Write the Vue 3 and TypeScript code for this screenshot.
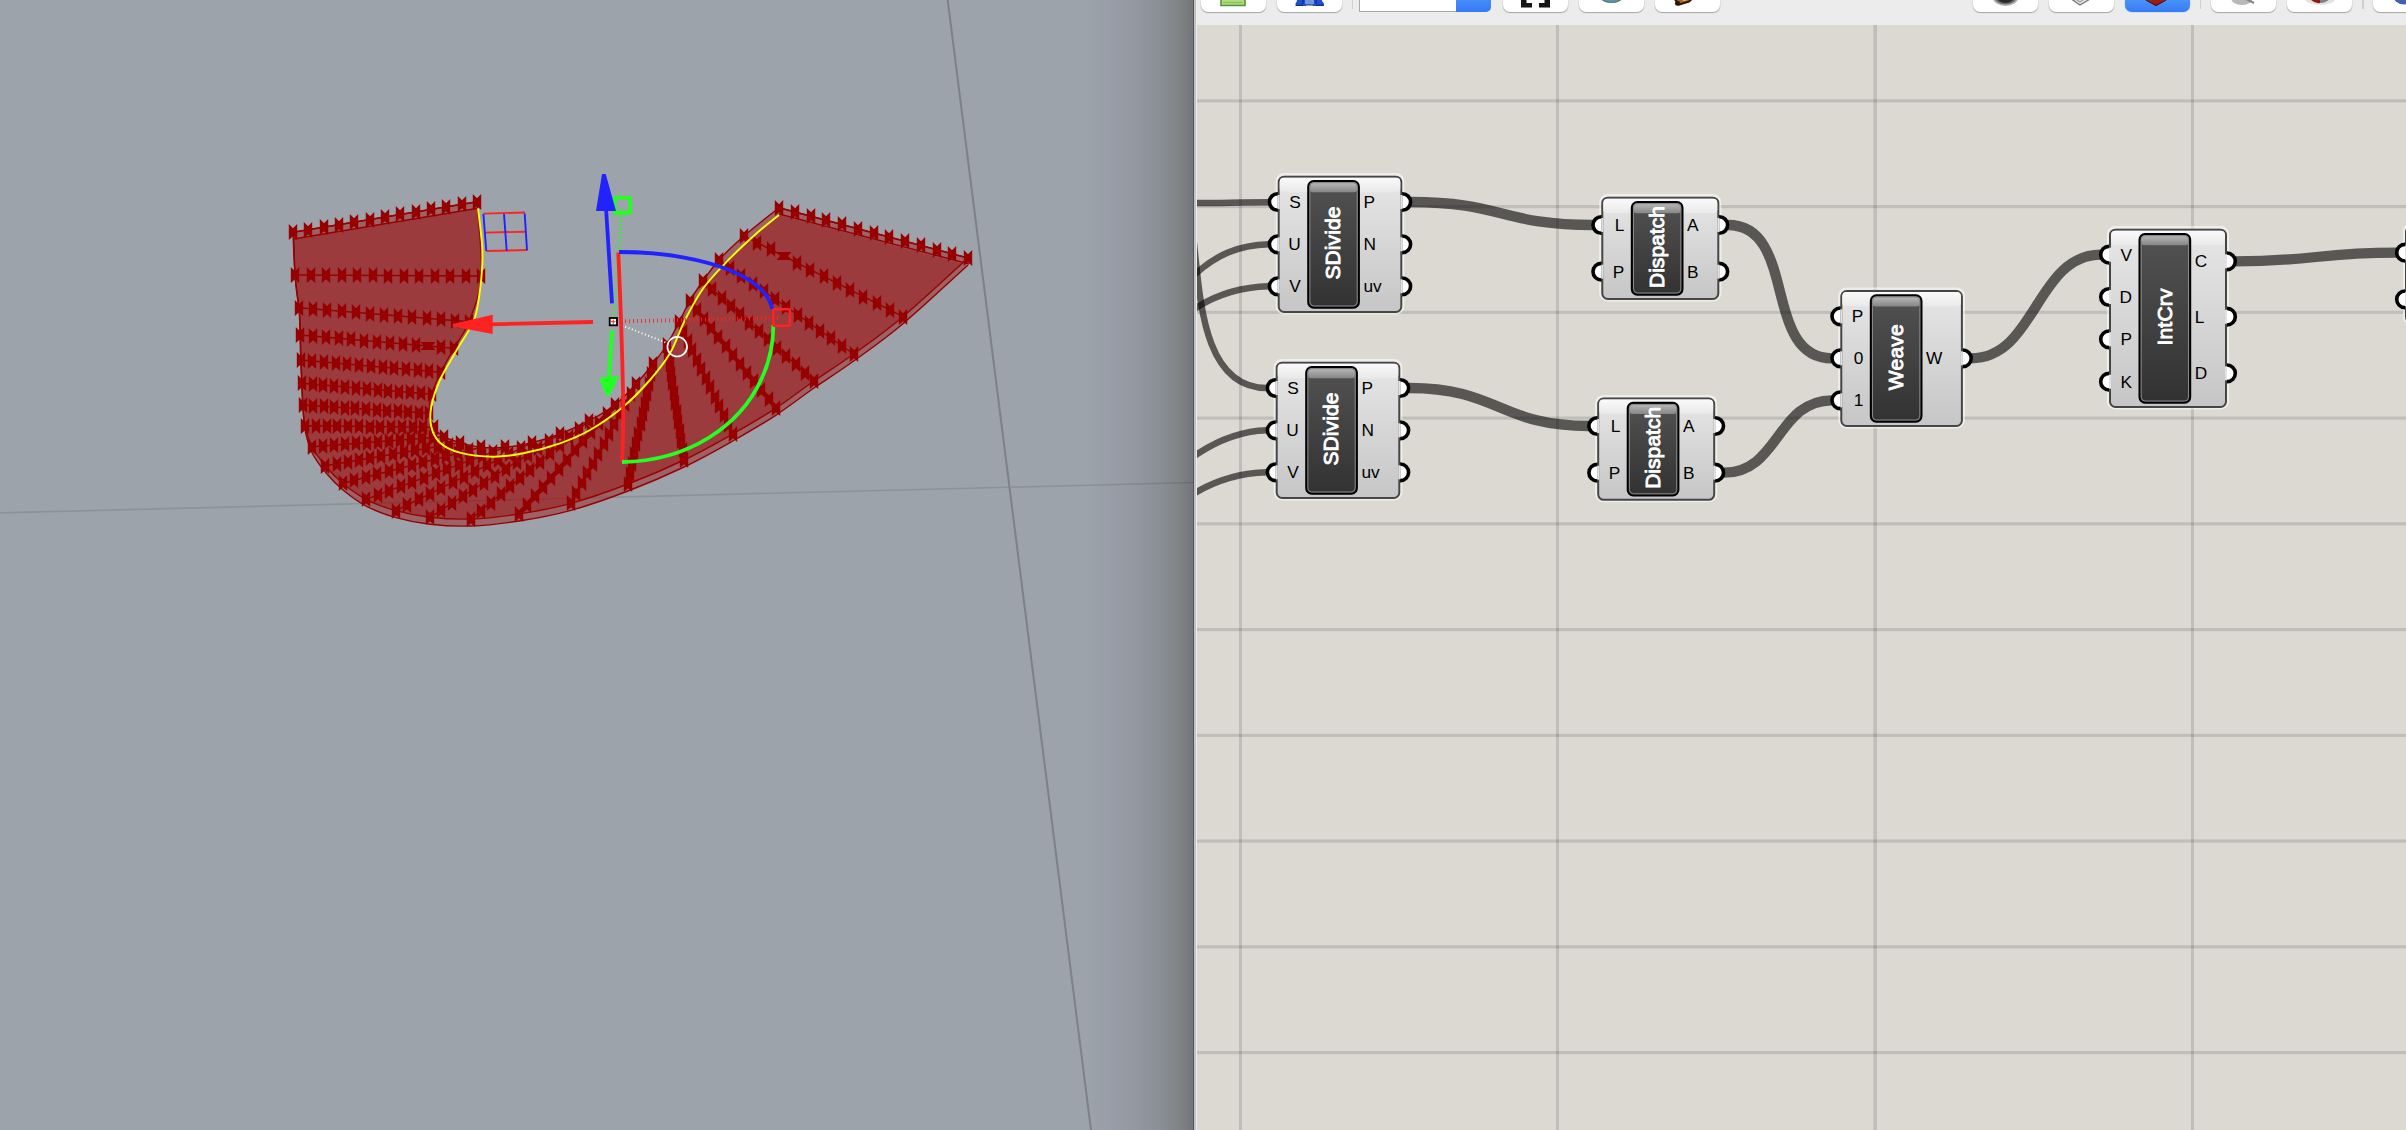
<script setup lang="ts">
type Pt = [number, number]

interface GhNode {
  name: string
  x: number
  y: number
  w: number
  h: number
  len: number
  inputs: [string, number][]
  outputs: [string, number][]
}

const outer: Pt[] = [
  [293, 232.3], [295, 275], [299, 307.7], [300, 335], [300.7, 360], [301.7, 383.3], [302.7, 405],
  [305, 425.7], [312, 446.7], [325.3, 465.7], [342.7, 483.3], [366, 499.3], [396, 510.7], [430, 517.3],
  [471, 519], [519, 514], [571, 503.3], [628, 484], [684, 460], [732.7, 434], [775.7, 408.3],
  [814, 381], [853.7, 354], [903, 316.7], [968, 258],
]
const inner: Pt[] = [
  [477, 201.7], [481.3, 276], [469, 321.7], [454, 348.3], [441, 372.3], [431.7, 394.3], [429.3, 413.3],
  [434, 427.3], [444, 436.7], [460, 442.7], [481, 447.3], [505, 447.3], [532, 442.7], [560, 434],
  [589, 420.7], [615, 405], [636, 384], [653, 364], [666.7, 345], [679, 322.3], [689.7, 301],
  [703, 281], [719, 260], [744, 236], [779, 207.7],
]
const yellow: Pt[] = [
  [478, 208.3], [482, 243.3], [482.3, 263.3], [480, 290], [474, 320], [456.7, 350], [440, 380],
  [431.3, 406.7], [431.3, 426.7], [440, 442.7], [460, 452.7], [493.3, 456.7], [523.3, 453.3],
  [560, 443.3], [590, 430], [623.3, 406.7], [650, 380], [670, 353.3], [685, 320], [703.3, 288.3],
  [726.7, 261.7], [756.7, 233.3], [779, 215],
]

/** Catmull-Rom spline through the given points, as cubic segments. */
function spline(p: Pt[], first = 'M'): string {
  let d = `${first}${p[0][0]} ${p[0][1]}`
  for (let i = 0; i < p.length - 1; i++) {
    const a = p[Math.max(i - 1, 0)]
    const b = p[i]
    const c = p[i + 1]
    const e = p[Math.min(i + 2, p.length - 1)]
    d += `C${b[0] + (c[0] - a[0]) / 6} ${b[1] + (c[1] - a[1]) / 6} ${c[0] - (e[0] - b[0]) / 6} ${c[1] - (e[1] - b[1]) / 6} ${c[0]} ${c[1]}`
  }
  return d
}

const lower: Pt[] = outer.map(([x, y], i) => [x + (i < 12 ? 0.6 : 0), y + 7] as Pt)
const surfaceA = spline(inner) + spline([...outer].reverse(), 'L') + 'Z'
const surfaceB = spline(yellow) + spline([...lower].reverse(), 'L') + 'Z'

const rows = outer.map((o, i) => `M${o[0]} ${o[1]}L${inner[i][0]} ${inner[i][1]}`).join('')

const markers = outer
  .flatMap((o, i) =>
    Array.from({ length: 13 }, (_, k) => {
      const x = Math.round(o[0] + ((inner[i][0] - o[0]) * k) / 12)
      const y = Math.round(o[1] + ((inner[i][1] - o[1]) * k) / 12)
      const flat = (i === 3 && k === 10) || (i === 23 && k === 9)
      return flat
        ? `M${x - 7.5} ${y - 4}H${x + 7.5}L${x + 4} ${y}L${x + 7.5} ${y + 4}H${x - 7.5}L${x - 4} ${y}Z`
        : `M${x - 4.2} ${y - 8}L${x} ${y - 3.7}L${x + 4.2} ${y - 8}V${y + 8}L${x} ${y + 4.2}L${x - 4.2} ${y + 8}Z`
    }),
  )
  .join('')

const gridX = [1239, 1556, 1873.3, 2191]
const gridY = Array.from({ length: 10 }, (_, i) => 99.25 + i * 105.75)

const nodes: GhNode[] = [
  { name: 'SDivide', x: 1277.7, y: 175.7, w: 124.6, h: 137.3, len: 73, inputs: [['S', 202], ['U', 244.3], ['V', 286.3]], outputs: [['P', 202], ['N', 244.3], ['uv', 286.3]] },
  { name: 'SDivide', x: 1275.7, y: 361.7, w: 124.6, h: 137.3, len: 73, inputs: [['S', 388], ['U', 430.3], ['V', 472.3]], outputs: [['P', 388], ['N', 430.3], ['uv', 472.3]] },
  { name: 'Dispatch', x: 1601.3, y: 196.7, w: 118, h: 103.3, len: 82, inputs: [['L', 225], ['P', 271.7]], outputs: [['A', 225], ['B', 271.7]] },
  { name: 'Dispatch', x: 1597.2, y: 397.5, w: 118, h: 103.3, len: 82, inputs: [['L', 426], ['P', 472.7]], outputs: [['A', 426], ['B', 472.7]] },
  { name: 'Weave', x: 1840.3, y: 290, w: 122.6, h: 137, len: 66, inputs: [['P', 316.3], ['0', 358.3], ['1', 400.3]], outputs: [['W', 358.3]] },
  { name: 'IntCrv', x: 2109, y: 228.7, w: 118, h: 179.3, len: 57, inputs: [['V', 254.7], ['D', 297], ['P', 339.3], ['K', 381.7]], outputs: [['C', 261.3], ['L', 316.7], ['D', 373.3]] },
  { name: '', x: 2405, y: 225.5, w: 118, h: 98, len: 0, inputs: [['', 252.7], ['', 299.3]], outputs: [] },
]

const thinWires = [
  'M1190 203C1220 203 1240 202.300 1269 202.300',
  'M1269 244.300C1240 245 1215 254 1190 279',
  'M1269 286.300C1240 287 1215 294 1190 312',
  'M1193 235C1200 290 1200 388 1267 388',
  'M1267 430.300C1240 431 1215 441 1190 459',
  'M1267 472.300C1240 473 1215 480 1190 496',
]

function wire(x1: number, y1: number, x2: number, y2: number, h: number): string {
  return `M${x1} ${y1}C${x1 + h} ${y1} ${x2 - h} ${y2} ${x2} ${y2}`
}
const thickWires = [
  wire(1411, 202, 1593, 225, 91),
  wire(1409, 388, 1589, 426, 90),
  wire(1728, 225, 1832, 358.3, 70),
  wire(1724, 472.7, 1832, 400.3, 55),
  wire(1971, 358.3, 2101, 254.7, 65),
  wire(2235, 261.3, 2397, 252.7, 80),
]
</script>

<template>
  <main class="screen">
    <svg class="viewport" width="1194" height="1130" viewBox="0 0 1194 1130">
      <defs>
        <linearGradient id="shade" x1="0" x2="1" y1="0" y2="0">
          <stop offset="0" stop-color="#8c8f9a" stop-opacity="0" />
          <stop offset=".35" stop-color="#8c8f9a" stop-opacity=".4" />
          <stop offset=".68" stop-color="#888c95" stop-opacity=".9" />
          <stop offset=".87" stop-color="#7f8386" />
          <stop offset="1" stop-color="#727577" />
        </linearGradient>
      </defs>
      <rect width="1194" height="1130" fill="#9ca3ab" />
      <rect x="1086" width="108" height="1130" fill="url(#shade)" />
      <path d="M0 512.900L1194 482.500" stroke="#000" stroke-opacity=".1" stroke-width="1.700" />
      <path d="M947.700 0L1091 1130" stroke="#7d8188" stroke-width="2" />
      <g fill="#9c0406" fill-opacity=".41">
        <path :d="surfaceA" stroke="#960000" stroke-width="1.400" />
        <path :d="surfaceB" />
      </g>
      <g fill="none" stroke="#960000" stroke-width="1.400">
        <path :d="spline(lower)" />
        <path d="M293.500 239L478 208.300M779 214L969 264" />
        <path :d="rows" />
      </g>
      <path :d="markers" fill="#960000" />
      <path :d="spline(yellow)" fill="none" stroke="#ff0" stroke-width="1.900" />

      <g fill="none" stroke-width="1.900">
        <path stroke="#f22" d="M483.500 213.600L525 212.500M485 232.600L525 231.700M486.500 251L527.500 250" />
        <path stroke="#22f" d="M483.400 214L486.300 251M504 214L506.700 250.700M524.700 213.500L527 250.300" />
      </g>
      <g fill="none" stroke-width="3.800">
        <path stroke="#2f2" stroke-width="4" stroke-dasharray=".9 3.100" d="M621.500 209L613.300 321" />
        <path stroke="#f22" stroke-width="4" stroke-dasharray=".9 3.100" d="M617 321.500L779 317.700" />
        <path stroke="#fff" stroke-width="2" stroke-dasharray="1 2.500" d="M622 325.500L671 344.500" />
        <path stroke="#22f" d="M612 303.300L606 208" />
        <path stroke="#f22" d="M593 322L490 324.300" />
        <path stroke="#2f2" d="M612 330L608.700 380" />
        <path stroke="#f22" d="M618.300 252.500C620 290 622 345 623 390C623.500 420 623 445 622 461.500" />
        <path stroke="#2f2" d="M622 462C690 461 740 425 761 380C770 361 773.500 342 773.300 325" />
        <path stroke="#22f" d="M619 252C660 252 690 257 718.300 266C748 276 768 290 772.300 309" />
        <rect x="614.700" y="197.700" width="15.300" height="15.300" rx="1" stroke="#2f2" />
        <rect x="773.300" y="309.300" width="16.500" height="16.500" rx="1.500" stroke="#f22" stroke-width="2.600" />
      </g>
      <path fill="#22f" d="M602 174H605.700L616 211H596Z" />
      <path fill="#f22" d="M452.700 324L492.700 314.700V334L452.700 326.500Z" />
      <path fill="#2f2" d="M599 377.700L619 376L609.500 395.700H606Z" />
      <rect x="609.700" y="318" width="7.300" height="7.300" fill="#fff" stroke="#000" stroke-width="1.800" />
      <path d="M613.300 319.500V324M611 321.700H615.600" stroke="#f22" stroke-width="1" />
      <circle cx="677.200" cy="346.700" r="9.800" fill="none" stroke="#fff" stroke-width="1.700" />
      <rect x="1193" width="1" height="1130" fill="#56595c" />
    </svg>

    <section class="window">
      <header class="toolbar">
        <div class="group">
          <span class="btn"><svg viewBox="0 0 65 13"><path d="M20-6H44V5.500H20Z" fill="#b4dc7c" stroke="#4f9444" stroke-width="1.600" /><path d="M22 2.500H42" stroke="#8cc45a" stroke-width="1.400" /></svg></span>
          <span class="btn"><svg viewBox="0 0 65 13"><path d="M20-4H45V1L47 3.500V6H18.500V3.500L20 1Z" fill="#1f4fd8" /><path d="M28-1H37V4H28Z" fill="#6d97dd" /><path d="M29 5.300H36" stroke="#b9ad6c" stroke-width="1" /><path d="M19 5.300H26M39 5.300H46.500M26-1V4M39-1V4" stroke="#132f7c" stroke-width="1.300" /></svg></span>
        </div>
        <i class="sep first" />
        <div class="combo"><i /></div>
        <div class="group">
          <span class="btn"><svg viewBox="0 0 65 13"><path d="M18-4V7.500H29V3H23.500V-4ZM47-4V7.500H36V3H41.500V-4Z" fill="#161616" /></svg></span>
          <span class="btn"><svg viewBox="0 0 65 13"><ellipse cx="32.500" cy="-3" rx="10.500" ry="5.500" fill="#5b98a5" stroke="#66757d" stroke-width="1.200" /></svg></span>
          <span class="btn"><svg viewBox="0 0 65 13"><path d="M18-3L24 4.500L34 1.500L39-3Z" fill="#a8662a" stroke="#32170d" stroke-width="2" /><circle cx="22.500" cy="3.300" r="2.500" fill="#2e130f" /><path d="M28 0L33-1" stroke="#f2c355" stroke-width="2" /></svg></span>
        </div>
        <div class="group right">
          <span class="btn"><svg viewBox="0 0 65 13"><ellipse cx="32.500" cy="-3" rx="13" ry="9" fill="#b4b4b4" /><ellipse cx="32.500" cy="-3" rx="11" ry="7.500" fill="#6e6e6e" /><ellipse cx="32.500" cy="-2" rx="8" ry="5" fill="#292929" /></svg></span>
          <span class="btn"><svg viewBox="0 0 65 13"><path d="M21-2L31 5L41-1" fill="#eee" stroke="#777" stroke-width="1.400" /><path d="M25-2L31 2L37-2" fill="none" stroke="#999" stroke-width="1.200" /></svg></span>
          <span class="btn active"><svg viewBox="0 0 65 13"><path d="M20-2L31 5.500L42-2Z" fill="#9c1c10" /><path d="M21 0L31 5.500L41 0" fill="none" stroke="#541015" stroke-width="1.400" /></svg></span>
        </div>
        <i class="sep" />
        <div class="group">
          <span class="btn"><svg viewBox="0 0 65 13"><ellipse cx="31" cy="-2" rx="11" ry="7" fill="#b8b8b8" /><path d="M35-1L43 3" stroke="#858585" stroke-width="2" /></svg></span>
          <span class="btn"><svg viewBox="0 0 65 13"><ellipse cx="33" cy="-1" rx="15" ry="6" fill="#e2e2e2" /><path d="M23-1Q28 4 33 3V-2Z" fill="#8f1812" /><path d="M33-2V3Q40 3 43-2Z" fill="#7f817c" /></svg></span>
        </div>
        <i class="sep" />
        <span class="btn"><svg viewBox="0 0 65 13"><ellipse cx="31" cy="-5" rx="11" ry="9.500" fill="#4460ad" /></svg></span>
      </header>

      <svg class="graph" width="1209" height="1105" viewBox="1197 25 1209 1105">
        <defs>
          <linearGradient id="body" x1="0" x2="0" y1="0" y2="1">
            <stop offset="0" stop-color="#e6e6e6" />
            <stop offset="1" stop-color="#c6c6c6" />
          </linearGradient>
          <linearGradient id="gloss" x1="0" x2="0" y1="0" y2="1">
            <stop offset="0" stop-color="#fafafa" />
            <stop offset="1" stop-color="#e9e9e9" />
          </linearGradient>
          <linearGradient id="plate" x1="0" x2="0" y1="0" y2="1">
            <stop offset="0" stop-color="#525252" />
            <stop offset="1" stop-color="#323232" />
          </linearGradient>
          <linearGradient id="shine" x1="0" x2="0" y1="0" y2="1">
            <stop offset="0" stop-color="#b8b8b8" />
            <stop offset="1" stop-color="#868686" />
          </linearGradient>
        </defs>
        <rect x="1197" y="25" width="1209" height="1105" fill="#dcd9d3" />
        <g fill="#000" fill-opacity=".12">
          <rect v-for="x in gridX" :key="x" :x="x" y="25" :width="x === 1873.3 ? 3.7 : 3" height="1105" />
          <rect v-for="y in gridY" :key="y" x="1197" :y="y" width="1209" height="3.200" />
        </g>
        <g fill="none" stroke="#000" stroke-opacity=".6">
          <path v-for="d in thinWires" :key="d" :d="d" stroke-width="6.500" />
          <path v-for="d in thickWires" :key="d" :d="d" stroke-width="10.300" />
        </g>
        <g v-for="(n, i) in nodes" :key="i">
          <rect :x="n.x - 0.9" :y="n.y - 1.4" :width="n.w + 1.8" :height="n.h + 1.6" rx="7" fill="none" stroke="#fff" stroke-opacity=".55" stroke-width="2.400" />
          <g fill="#fff" stroke="#000" stroke-width="3.600">
            <circle v-for="p in n.inputs" :key="p[1]" :cx="n.x" :cy="p[1]" r="8.300" />
            <circle v-for="p in n.outputs" :key="p[1]" :cx="n.x + n.w" :cy="p[1]" r="8.300" />
          </g>
          <rect :x="n.x + 1" :y="n.y + 1" :width="n.w - 2" :height="n.h - 2" rx="5.500" fill="url(#body)" stroke="#464646" stroke-width="2" />
          <rect :x="n.x + 2" :y="n.y + 2" :width="n.w - 4" height="14.500" rx="4" fill="url(#gloss)" />
          <g fill="#e2e2e2">
            <rect v-for="p in n.inputs" :key="p[1]" :x="n.x" :y="p[1] - 7" width="2" height="14" />
            <rect v-for="p in n.outputs" :key="p[1]" :x="n.x + n.w - 2" :y="p[1] - 7" width="2" height="14" />
          </g>
          <template v-if="n.name">
            <rect :x="n.x + 30.5" :y="n.y + 5.300" width="50.700" :height="n.h - 10.6" rx="5.500" fill="url(#plate)" stroke="#000" stroke-width="2" />
            <rect :x="n.x + 32" :y="n.y + 6.800" width="47.700" height="9.700" rx="3.500" fill="url(#shine)" />
            <rect :x="n.x + 32.2" :y="n.y + 7" width="47.300" :height="n.h - 14" rx="4" fill="none" stroke="#888" stroke-width="1" />
            <text class="name" :transform="`translate(${n.x + 62.6} ${n.y + n.h / 2 - 1.3}) rotate(-90)`" text-anchor="middle" :textLength="n.len">{{ n.name }}</text>
            <text v-for="p in n.inputs" :key="p[1]" class="port" :x="n.x + 23.1" :y="p[1] + 5.900" text-anchor="end">{{ p[0] }}</text>
            <text v-for="p in n.outputs" :key="p[1]" class="port" :x="n.x + 85.8" :y="p[1] + 5.900">{{ p[0] }}</text>
          </template>
        </g>
      </svg>
    </section>
  </main>
</template>

<style>
body {
  margin: 0;
  overflow: hidden;
}
</style>

<style scoped>
.screen {
  display: flex;
  width: 2406px;
  height: 1130px;
  overflow: hidden;
  background: #9ca3ab;
  font-family: "Liberation Sans", Arial, sans-serif;
}
svg {
  display: block;
}
.viewport {
  flex: none;
}
.window {
  box-sizing: border-box;
  flex: none;
  width: 1212px;
  background: #ececec;
  border-left: 2px solid #c2c2c2;
  padding-left: 1px;
}
.toolbar {
  box-sizing: border-box;
  display: flex;
  align-items: flex-start;
  height: 25px;
  padding-left: 4.4px;
  background: #ececec;
  overflow: hidden;
}
.group {
  display: flex;
  gap: 11px;
}
.group.right {
  margin-left: 252.6px;
}
.btn {
  flex: none;
  width: 65px;
  height: 12px;
  background: #fff;
  border-radius: 0 0 7px 7px;
  box-shadow: 0 0 1px #999, 0 1px 1px #a8a8a8;
  overflow: hidden;
}
.btn svg {
  width: 65px;
  height: 13px;
}
.btn.active {
  background: linear-gradient(#4b92f8, #347cf6);
  box-shadow: 0 0 1px #2865d8;
}
.sep {
  flex: none;
  width: 1.5px;
  height: 9px;
  margin: 0 9.7px 0 10px;
  background: #cfcfcf;
}
.sep.first {
  margin: 0 5.3px 0 9.6px;
}
.combo {
  box-sizing: border-box;
  display: flex;
  justify-content: flex-end;
  flex: none;
  width: 132px;
  height: 12px;
  margin-right: 12.6px;
  background: #fff;
  border: solid #a9a9a9;
  border-width: 0 0 1px 1px;
  border-radius: 0 0 6px 0;
}
.combo i {
  width: 35px;
  height: 12px;
  background: linear-gradient(#458cf8, #347af6);
  border-radius: 0 0 5px 0;
}
.name {
  font-size: 21px;
  fill: #fff;
  stroke: #fff;
  stroke-width: 0.9px;
}
.port {
  font-size: 17.3px;
  fill: #000;
}
</style>
